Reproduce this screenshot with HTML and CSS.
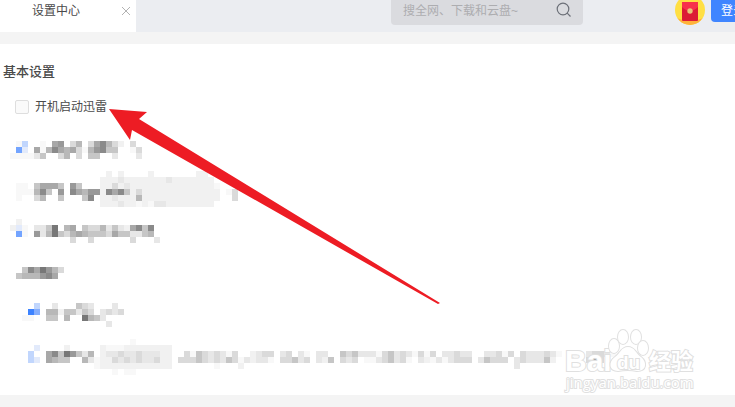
FILE: index.html
```
<!DOCTYPE html>
<html lang="zh-CN">
<head>
    <meta charset="UTF-8">
    <meta name="viewport" content="width=device-width, initial-scale=1.0">
    <title>设置中心</title>
    <link rel="stylesheet" href="styles.css">
</head>
<body>

    <!-- Top bar -->
    <header class="topbar">
        <div class="tab">
            <span class="tab-title">设置中心</span>
            <button class="tab-close" type="button" aria-label="关闭">
                <svg width="8" height="8" viewBox="0 0 8 8"><path d="M0 0L8 8M8 0L0 8" stroke="#b2b2b2" fill="none"/></svg>
            </button>
        </div>

        <form class="search">
            <input class="search-input" type="text" placeholder="搜全网、下载和云盘~" aria-label="搜索">
            <button class="search-btn" type="button" aria-label="搜索">
                <svg width="16" height="16" viewBox="0 0 16 16" fill="none" stroke="#6c7078" stroke-width="1.2">
                    <circle cx="7" cy="7" r="5.8"/>
                    <path d="M11.2 11.2L14.5 14.5"/>
                </svg>
            </button>
        </form>

        <div class="actions">
            <svg class="red-packet" width="30" height="25" viewBox="0 0 30 25">
                <clipPath id="coin"><circle cx="15" cy="10" r="15"/></clipPath>
                <g clip-path="url(#coin)">
                    <rect width="30" height="25" fill="#ffdf43"/>
                    <path d="M0 17Q15 25 30 17V25H0z" fill="#ffb13b"/>
                </g>
                <rect x="7" y="2" width="16" height="19" rx="1" fill="#dc1a35"/>
                <path d="M7 2H23V7Q19 11 15 11T7 7z" fill="#f7304b"/>
                <circle cx="15" cy="11" r="2.7" fill="#e9c476"/>
            </svg>
            <button class="login-btn" type="button">登录</button>
        </div>
    </header>

    <!-- Settings -->
    <main class="panel">
        <h1 class="panel-title">基本设置</h1>
        <label class="option">
            <input class="option-box" type="checkbox">
            <span>开机启动迅雷</span>
        </label>

        <div class="masked-list" aria-hidden="true">
            <svg class="masked" data-row="startup"></svg>
            <svg class="masked" data-row="select"></svg>
            <svg class="masked" data-row="download"></svg>
            <svg class="masked" data-row="heading"></svg>
            <svg class="masked" data-row="mode"></svg>
            <svg class="masked" data-row="limit"></svg>
        </div>

        <svg class="arrow" width="332" height="196" viewBox="0 0 332 196">
            <path d="M0 0L38 3L30 10L331 194L329 195L23 21L21 31z" fill="#ed1c24"/>
        </svg>

        <svg class="watermark" width="136" height="66" viewBox="0 0 136 66">
            <g class="mark">
                <text class="mark-bai" x="2" y="43">Bai</text>
                <ellipse cx="51" cy="18" rx="5" ry="7"/>
                <ellipse cx="60" cy="9" rx="5" ry="7"/>
                <ellipse cx="73" cy="9" rx="5" ry="7"/>
                <ellipse cx="80" cy="20" rx="5" ry="7"/>
                <path d="M65 19C58 19 57 26 52 29C45 34 46 43 55 43Q65 41 74 43C84 43 84 34 78 29C73 26 72 19 65 19z"/>
                <text class="mark-du" x="54" y="41">du</text>
                <text class="mark-cn" x="86" y="41">经验</text>
                <text class="mark-url" x="3" y="60">jingyan.baidu.com</text>
            </g>
        </svg>
    </main>

    <script src="masked.js"></script>
</body>
</html>
```
FILE: styles.css
```
* {
    margin: 0;
    padding: 0;
    box-sizing: border-box;
    font-family: "Liberation Sans", "Noto Sans CJK SC", sans-serif;
}

body {
    background: #f4f4f4;
    color: #4a4a4a;
    font-size: 12px;
    overflow: hidden;
}

button {
    border: none;
    background: none;
    cursor: pointer;
}

/* Top bar */
.topbar {
    display: flex;
    align-items: flex-start;
    height: 32px;
    background: #ebedf1;
    overflow: hidden;
}

.tab {
    display: flex;
    justify-content: space-between;
    width: 136px;
    height: 32px;
    padding: 0 6px 0 32px;
    background: #fff;
}

.tab-title {
    line-height: 22px;
}

.tab-close {
    display: flex;
    align-items: center;
    height: 22px;
}

.search {
    display: flex;
    align-items: flex-start;
    width: 192px;
    height: 25px;
    margin-left: auto;
    margin-right: 92px;
    padding: 0 11px 0 12px;
    background: #dadbdf;
    border-radius: 0 0 4px 4px;
}

.search-input {
    flex: 1;
    min-width: 0;
    height: 22px;
    border: none;
    outline: none;
    background: none;
    font-size: 12px;
}

.search-input::placeholder {
    color: #adadb0;
}

.search-btn {
    display: flex;
    padding-top: 2px;
}

.actions {
    display: flex;
    flex: none;
    gap: 6px;
    width: 60px;
    overflow: hidden;
}

.red-packet {
    flex: none;
}

.login-btn {
    flex: none;
    height: 22px;
    padding: 0 10px;
    background: #3f85ff;
    border-radius: 0 0 4px 4px;
    color: #fff;
    font-size: 12px;
    line-height: 22px;
}

/* Settings panel */
.panel {
    position: relative;
    margin: 12px 0;
    padding: 16px 0 20px;
    background: #fff;
}

.panel-title {
    margin-bottom: 12px;
    padding-left: 3px;
    font-size: 13px;
    font-weight: 500;
    line-height: 24px;
}

.option {
    display: flex;
    align-items: center;
    gap: 6px;
    padding-left: 15px;
    line-height: 22px;
}

.option-box {
    appearance: none;
    width: 14px;
    height: 14px;
    background: #fafafa;
    border: 1px solid #dedede;
    border-radius: 2px;
}

/* Pixelated rows */
.masked-list {
    display: flex;
    flex-direction: column;
    gap: 12px;
    margin-top: 17px;
    padding-left: 10px;
}

.masked {
    display: block;
    flex: none;
    shape-rendering: crispEdges;
}

/* Overlays */
.arrow {
    position: absolute;
    left: 109px;
    top: 65px;
}

.watermark {
    position: absolute;
    right: 36px;
    bottom: 1px;
}

.mark {
    fill: #fff;
    stroke: #e0e0e0;
    stroke-width: 2;
    paint-order: stroke;
}

.mark-bai {
    font-size: 30px;
    font-weight: bold;
}

.mark-du {
    font-size: 19px;
    font-weight: bold;
}

.mark-cn {
    font-size: 22px;
    font-weight: bold;
}

.mark-url {
    font-family: "Open Sans", sans-serif;
    font-size: 15px;
}
```
FILE: masked.js
```
// One character per 6px cell, a dot is an empty cell
const CELL = 6;

const COLORS = {
    7: "#777", 8: "#8a8a8a", 9: "#999", a: "#a8a8a8", b: "#b8b8b8", c: "#c6c6c6",
    d: "#dadada", e: "#e7e7e7", g: "#f1f1f1", f: "#f8f8f8",
    P: "#73a4ff", Q: "#c1d6fd", R: "#e2eafb", S: "#3d83ff", T: "#85aefd"
};

const ROWS = {
    startup: [
        "",
        ".fQ..f.a9.db.da8bdg.d.",
        ".PR.afb8abadfb98cc..fd",
        "ffffec..db.d.cc..e...e"
    ],
    select: [
        "................g.g....g.......gg",
        "...............gggegggggggeggggggg",
        ".ff.caaac.9c...ggdgeggggggggggggggf",
        ".fffb8c.9.8ab99g8a8cgdggggggggggggg.fd",
        ".f..db..c...c8.ggegggbggggggggggggg..d",
        "...............gggeggfgfeegggggggg"
    ],
    download: [
        ".g",
        "gRf.eec7.ba.cddbecega8c8",
        ".Pf.9eb7cdbabcccdacceecb",
        "..........d..d......d...e"
    ],
    heading: [
        "",
        "",
        "..c8a79bd",
        ".cbbb98a",
        "",
        ""
    ],
    mode: [
        "....Q..e...cde...e",
        "...ST.bbgccecd.eded",
        "..ff..cc.b..7bce",
        "................e"
    ],
    limit: [
        "....................f",
        "....R....g.....gfffgggggggg",
        "...Q..a8c79ceb.geedeedeeegg..dfcdedefd..gedd.ed.ef.ee..cdceeefdcedefdfd.eedee..eedfd.deeedef.ff.eddef",
        "...QR.abcc..befggdededeedgg.dddcdedecdfegeef.ddced.egc.ded.ffedcedf.egfefeddd.ecddd.edeeecg..g..dad",
        "..............fgggggggggggg.......f...g.............................................e",
        ".................f.ff"
    ]
};

document.querySelectorAll(".masked").forEach(svg => {
    const rows = ROWS[svg.dataset.row];
    const cols = Math.max(...rows.map(row => row.length));
    svg.setAttribute("width", cols * CELL);
    svg.setAttribute("height", rows.length * CELL);

    rows.forEach((row, y) => {
        [...row].forEach((code, x) => {
            if (code === ".") return;
            const rect = document.createElementNS("http://www.w3.org/2000/svg", "rect");
            rect.setAttribute("x", x * CELL);
            rect.setAttribute("y", y * CELL);
            rect.setAttribute("width", CELL);
            rect.setAttribute("height", CELL);
            rect.setAttribute("fill", COLORS[code]);
            svg.appendChild(rect);
        });
    });
});
```
